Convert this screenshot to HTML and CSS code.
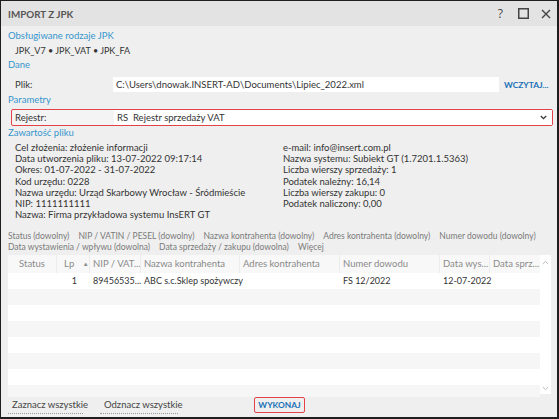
FILE: index.html
```html
<!DOCTYPE html>
<html lang="pl">
<head>
<meta charset="utf-8">
<title>Import z JPK</title>
<link rel="stylesheet" href="styles.css">
</head>
<body>
<div class="win">
  <div class="titlebar">
    <span class="title">IMPORT Z JPK</span>
    <div class="ctrls">
      <span class="help">?</span>
      <svg class="ic" width="11" height="11" viewBox="0 0 11 11"><rect x="0.75" y="0.75" width="9.5" height="9.5" fill="none" stroke="#444" stroke-width="1.5"/></svg>
      <svg class="ic" width="10" height="10" viewBox="0 0 10 10"><path d="M1 1L9 9M9 1L1 9" stroke="#444" stroke-width="1.4"/></svg>
    </div>
  </div>
  <div class="body">
    <div class="sec first">Obsługiwane rodzaje JPK</div>
    <div class="jpk">JPK_V7 • JPK_VAT • JPK_FA</div>
    <div class="sec">Dane</div>
    <div class="frow">
      <span class="lbl">Plik:</span>
      <span class="field">C:\Users\dnowak.INSERT-AD\Documents\Lipiec_2022.xml</span>
      <span class="load">WCZYTAJ...</span>
    </div>
    <div class="sec">Parametry</div>
    <div class="rrow">
      <span class="lbl">Rejestr:</span>
      <span class="field sel"><span>RS&nbsp; Rejestr sprzedaży VAT</span>
        <svg width="7" height="5" viewBox="0 0 7 5"><path d="M0.8 1L3.5 3.6L6.2 1" fill="none" stroke="#333" stroke-width="1.3"/></svg>
      </span>
    </div>
    <div class="sec">Zawartość pliku</div>
    <div class="info">
      <div class="col">
        <div>Cel złożenia: złożenie informacji</div>
        <div>Data utworzenia pliku: 13-07-2022 09:17:14</div>
        <div>Okres: 01-07-2022 - 31-07-2022</div>
        <div>Kod urzędu: 0228</div>
        <div>Nazwa urzędu: Urząd Skarbowy Wrocław - Śródmieście</div>
        <div>NIP: 1111111111</div>
        <div>Nazwa: Firma przykładowa systemu InsERT GT</div>
      </div>
      <div class="col">
        <div>e-mail: info@insert.com.pl</div>
        <div>Nazwa systemu: Subiekt GT (1.7201.1.5363)</div>
        <div>Liczba wierszy sprzedaży: 1</div>
        <div>Podatek należny: 16,14</div>
        <div>Liczba wierszy zakupu: 0</div>
        <div>Podatek naliczony: 0,00</div>
      </div>
    </div>
    <div class="filters">
      <div class="fline"><span>Status (dowolny)</span><span>NIP / VATIN / PESEL (dowolny)</span><span>Nazwa kontrahenta (dowolny)</span><span>Adres kontrahenta (dowolny)</span><span>Numer dowodu (dowolny)</span></div>
      <div class="fline"><span>Data wystawienia / wpływu (dowolna)</span><span>Data sprzedaży / zakupu (dowolna)</span><span>Więcej</span></div>
    </div>
    <div class="grid">
      <div class="rows">
        <div class="tr th">
          <span class="c c-st center">Status</span>
          <span class="c c-lp">Lp <span class="arrow">▲</span></span>
          <span class="c c-nip">NIP / VAT...</span>
          <span class="c c-naz">Nazwa kontrahenta</span>
          <span class="c c-adr">Adres kontrahenta</span>
          <span class="c c-num">Numer dowodu</span>
          <span class="c c-dw">Data wys...</span>
          <span class="c c-ds">Data sprz...</span>
        </div>
        <div class="tr data">
          <span class="c c-st"></span>
          <span class="c c-lp lpv">1</span>
          <span class="c c-nip">89456535...</span>
          <span class="c c-naz">ABC s.c.Sklep spożywczy</span>
          <span class="c c-adr"></span>
          <span class="c c-num">FS 12/2022</span>
          <span class="c c-dw">12-07-2022</span>
          <span class="c c-ds"></span>
        </div>
        <div class="tr alt"></div>
        <div class="tr"></div>
        <div class="tr alt"></div>
        <div class="tr"></div>
        <div class="tr alt"></div>
        <div class="tr"></div>
        <div class="tr alt last"></div>
      </div>
      <div class="sbar">
        <svg width="7" height="5" viewBox="0 0 7 5"><path d="M0.8 4L3.5 1.4L6.2 4" fill="none" stroke="#bbb" stroke-width="1"/></svg>
        <svg width="7" height="5" viewBox="0 0 7 5"><path d="M0.8 1L3.5 3.6L6.2 1" fill="none" stroke="#bbb" stroke-width="1"/></svg>
      </div>
    </div>
  </div>
  <div class="footer">
    <span class="link l1">Zaznacz wszystkie</span>
    <span class="link l2">Odznacz wszystkie</span>
    <span class="run">WYKONAJ</span>
  </div>
</div>
</body>
</html>
```
FILE: styles.css
```css
* { box-sizing: border-box; }
html, body { margin: 0; padding: 0; }
body {
  width: 559px;
  height: 419px;
  background: #ffffff;
  font-family: Lato, "Open Sans", sans-serif;
  font-size: 9.5px;
  color: #333;
  overflow: hidden;
}
.win {
  width: 559px;
  height: 419px;
  border-style: solid;
  border-color: #1e1e1e;
  border-width: 1px 2px 2px 1px;
  background: #efefef;
  display: flex;
  flex-direction: column;
  overflow: hidden;
}
.titlebar {
  height: 25px;
  background: #e3e3e3;
  display: flex;
  align-items: center;
  justify-content: space-between;
  padding: 0 6px 0 7px;
  flex: none;
}
.title {
  font-weight: 700;
  font-size: 9.8px;
  color: #555;
}
.ctrls {
  display: flex;
  align-items: center;
  gap: 12px;
}
.help {
  font-size: 12px;
  color: #444;
  font-family: "Open Sans", sans-serif;
  margin-right: 3px;
}
.body {
  flex: 1;
  padding: 4px 7px 0 7px;
  display: flex;
  flex-direction: column;
  min-height: 0;
}
.sec {
  color: #3596cd;
  height: 12px;
  line-height: 12px;
  flex: none;
}
.jpk {
  height: 16px;
  line-height: 16px;
  padding-left: 7px;
  font-size: 9px;
  margin-top: 1px;
  flex: none;
}
.frow {
  display: flex;
  align-items: center;
  height: 15px;
  margin-top: 6px;
  margin-bottom: 2px;
  flex: none;
}
.lbl {
  width: 105px;
  padding-left: 7px;
  flex: none;
}
.field {
  background: #fff;
  height: 15px;
  line-height: 15px;
  padding-left: 3px;
  white-space: nowrap;
}
.frow .field { width: 386px; flex: none; }
.load {
  color: #1b72b8;
  font-weight: 700;
  margin-left: 5px;
  font-size: 8.4px;
  white-space: nowrap;
}
.rrow {
  display: flex;
  align-items: stretch;
  height: 17px;
  margin: 3px 0 0 3px;
  width: 542px;
  border: 1px solid #e3424a;
  border-radius: 2px;
  background: #f4f4f4;
  flex: none;
}
.rrow .lbl {
  width: 102px;
  padding-left: 3px;
  line-height: 15px;
}
.field.sel {
  flex: 1;
  display: flex;
  align-items: center;
  justify-content: space-between;
  padding-right: 5px;
}
.rrow + .sec { margin-top: 1px; }
.info {
  display: flex;
  margin-top: 3px;
  padding-left: 7px;
  line-height: 11.2px;
  flex: none;
}
.info .col:first-child { width: 268px; }
.filters {
  margin-top: 11px;
  color: #7a7a7a;
  line-height: 11px;
  font-size: 8.5px;
  flex: none;
}
.fline { display: flex; gap: 9px; white-space: nowrap; }
.fline span { flex: none; }
.grid {
  margin-top: 2px;
  display: flex;
  width: 543px;
  height: 139px;
  background: #fff;
  flex: none;
}
.rows { width: 532px; }
.tr {
  display: flex;
  height: 16px;
  line-height: 16px;
  background: #fff;
}
.tr.data { font-size: 9px; }
.tr.alt { background: #f6f6f6; }
.tr.last { height: 12px; }
.tr.th {
  height: 18px;
  line-height: 18px;
  background: #f8f8f8;
  color: #8a8a8a;
}
.c { flex: none; padding-left: 3px; white-space: nowrap; }
.th .c { border-right: 1px solid #ececec; overflow: hidden; }
.th .c:last-child { border-right: none; }
.c-st { width: 49px; }
.c-lp { width: 33px; padding-left: 7px; }
.c-nip { width: 51px; }
.c-naz { width: 99px; }
.c-adr { width: 100px; }
.c-num { width: 100px; }
.c-dw { width: 50px; }
.c-ds { width: 50px; }
.center { text-align: center; padding-left: 0; }
.arrow { font-size: 6px; margin-left: 6px; vertical-align: 1px; color: #888; }
.lpv { text-align: right; padding-right: 13px; }
.sbar {
  width: 11px;
  display: flex;
  flex-direction: column;
  justify-content: space-between;
  align-items: center;
  padding: 5px 0 3px;
}
.footer {
  height: 23px;
  flex: none;
  display: flex;
  align-items: flex-start;
  padding: 4px 0 0 7px;
  color: #444;
}
.link {
  line-height: 14px;
  border-bottom: 1px dotted #999;
  padding: 0 4px 1px;
  white-space: nowrap;
}
.l1 { width: 75px; }
.l2 { width: 78px; margin-left: 17px; }
.run {
  margin-left: 76px;
  margin-top: -1px;
  border: 1px solid #e3424a;
  border-radius: 2px;
  color: #1b72b8;
  font-weight: 700;
  font-size: 8.4px;
  padding: 0 2px;
  height: 16px;
  line-height: 14px;
  width: 51px;
  text-align: center;
}
```
